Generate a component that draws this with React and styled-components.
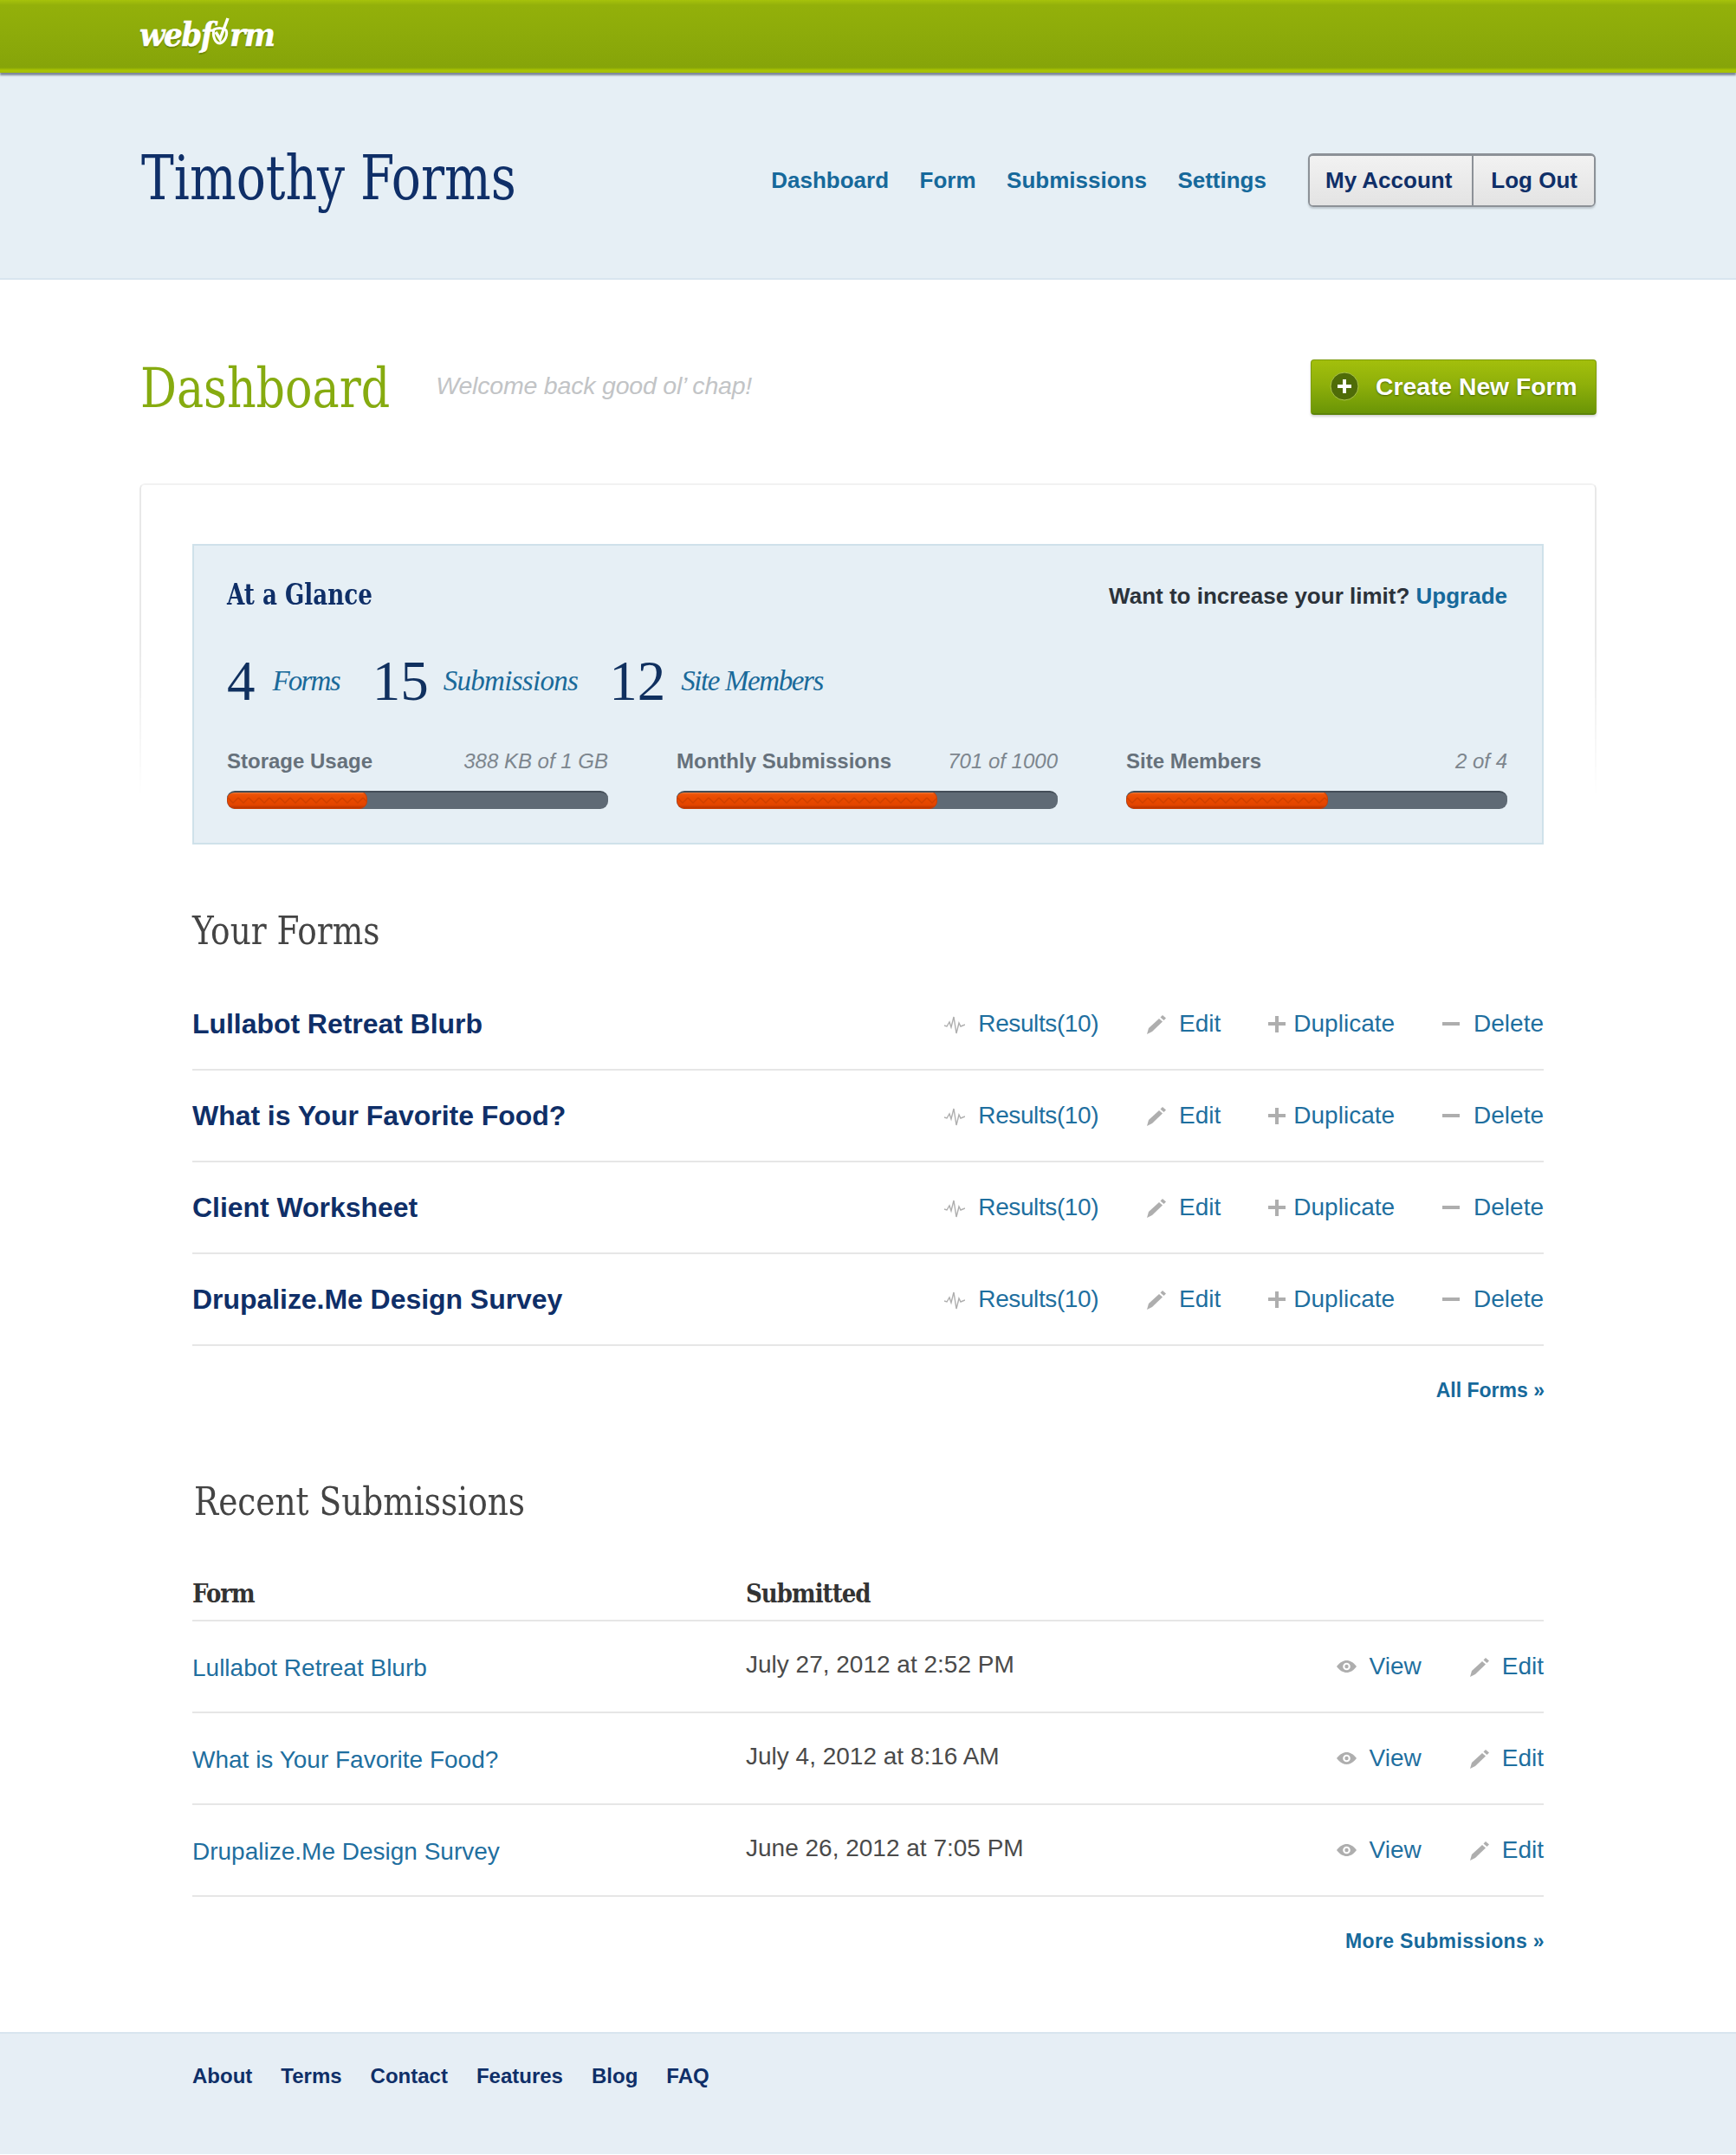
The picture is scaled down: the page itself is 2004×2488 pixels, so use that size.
import React from "react";
import styled, { createGlobalStyle } from "styled-components";

const Global = createGlobalStyle`
  html, body { margin: 0; padding: 0; background: #fff; }
  body { font-family: "Liberation Sans", Arial, sans-serif; color: #333; }
  a { text-decoration: none; color: inherit; }
  * { box-sizing: border-box; }
`;

const slab = `"DejaVu Serif Condensed", "DejaVu Serif", serif`;
const roman = `"Liberation Serif", serif`;

const TopBar = styled.div`
  height: 84px; padding: 20px 0 0 161px; display: flex; align-items: flex-start;
  background: linear-gradient(#a6c20b 0, #93b00a 6px, #8dab0a 40px, #86a409 78px, #aac402 81px, #a5bf02 84px);
  box-shadow: 0 3px 2px rgba(70, 80, 100, .65);
  position: relative;
`;
const Logo = styled.a`
  display: flex; align-items: center; height: 38px;
  font: italic bold 38px ${slab}; color: #fff; letter-spacing: -1.4px;
  -webkit-text-stroke: .5px #fff;
  text-shadow: 0 2px 1px rgba(60, 80, 0, .4);
`;
const LogoCheck = styled.svg`width: 24px; height: 36px; margin: -4px -1px 0 -3px; flex: none;`;

const Masthead = styled.header`
  height: 239px; padding: 0 162px 0 163px; display: flex; align-items: center; justify-content: space-between;
  background: #e6eff5; border-bottom: 2px solid #d8e5ef;
`;
const SiteName = styled.h1`
  margin: 6px 0 0; font: 400 71px/80px ${slab}; color: #0f2f68;
  transform: scaleX(.887); transform-origin: left center;
`;
const MastRight = styled.div`display: flex; align-items: center; margin-top: 10px;`;
const Nav = styled.nav`display: flex; gap: 35.5px; margin-right: 48px;`;
const NavLink = styled.a`font: bold 26px/32px "Liberation Sans", sans-serif; color: #16699b;`;
const AccountGroup = styled.div`
  display: flex; height: 62px; border: 2px solid #8c9197; border-top-width: 3px; border-radius: 6px; overflow: hidden;
  box-shadow: 0 2px 2px rgba(80, 90, 100, .25);
`;
const AccountLink = styled.a`
  display: flex; align-items: center; padding: 0 ${p => p.$right}px 0 ${p => p.$left}px;
  background: linear-gradient(#f2f2f2, #e3e3e3);
  font: bold 26px "Liberation Sans", sans-serif; color: #0f2f68;
  & + & { border-left: 2px solid #8c9197; }
`;

const Main = styled.main`padding: 0 161px 90px;`;
const TitleRow = styled.div`
  height: 235px; display: flex; align-items: center; padding: 12px 0 0 1px;
`;
const PageTitle = styled.h2`
  margin: 2px 24px 0 0; font: 400 64px/70px ${slab}; color: #86ab10;
  transform: scaleX(.908); transform-origin: left center;
`;
const Welcome = styled.p`margin: -2px 0 0; font: italic 28.5px "Liberation Sans", sans-serif; color: #c2c4c6; letter-spacing: -.2px;`;
const CreateButton = styled.a`
  margin-left: auto; width: 330px; height: 64px; display: flex; align-items: center; gap: 19px; padding-left: 21px;
  border-radius: 4px; background: linear-gradient(#a3bf0c, #8fb00a 45%, #6a9506);
  border: 1px solid #7d9b0c; border-bottom: 2px solid #5d840a;
  box-shadow: 0 2px 3px rgba(0, 0, 0, .18);
  font: bold 28.3px "Liberation Sans", sans-serif; color: #fff; text-shadow: 0 1px 2px rgba(40, 60, 0, .6);
`;
const PlusDisc = styled.svg`width: 34px; height: 34px; flex: none;`;

const Card = styled.section`
  position: relative; padding: 70px 61px 0;
  &::before {
    content: ""; position: absolute; top: 0; left: 0; right: 0; height: 360px;
    border: 2px solid #e8e8e8; border-top-color: #f2f2f2; border-bottom: none; border-radius: 6px 6px 0 0;
    -webkit-mask-image: linear-gradient(#000 50%, transparent);
    mask-image: linear-gradient(#000 50%, transparent);
  }
`;
const Glance = styled.div`
  position: relative; height: 347px; padding: 39px 39px 0 38px; background: #e6eff5; border: 2px solid #cfe1ea;
`;
const GlanceTop = styled.div`display: flex; justify-content: space-between; align-items: center; height: 36px;`;
const GlanceTitle = styled.h3`
  margin: -2px 0 0; font: bold 34px ${slab}; color: #0f2f68;
  transform: scaleX(.855); transform-origin: left center;
`;
const Limit = styled.p`margin: 3px 1px 0 0; font: bold 26px "Liberation Sans", sans-serif; color: #2b323a;`;
const LimitLink = styled.a`color: #16699b;`;
const Stats = styled.div`display: flex; align-items: center; height: 72px; margin-top: 45px;`;
const StatNum = styled.span`font: 400 65px/72px ${roman}; color: #10305f; margin-right: ${p => p.$gap}px;`;
const StatLabel = styled.a`
  font: italic 33px/72px ${roman}; color: #1a6a9a; margin-right: ${p => p.$gap}px; letter-spacing: ${p => p.$track}px;
`;
const Meters = styled.div`display: grid; grid-template-columns: repeat(3, 440px); column-gap: 79px; margin-top: 41px;`;
const Meter = styled.div``;
const MeterHead = styled.div`display: flex; justify-content: space-between; height: 32px; align-items: center;`;
const MeterName = styled.span`font: bold 24px "Liberation Sans", sans-serif; color: #66717b;`;
const MeterValue = styled.span`font: italic 24px "Liberation Sans", sans-serif; color: #7d868e;`;
const Track = styled.div`
  height: 21px; margin-top: 18px; border-radius: 9px; background: #5f6a75; border-top: 2px solid #434d57; overflow: hidden;
`;
const Fill = styled.div`
  height: 21px; margin-top: -2px; border-radius: 9px; overflow: hidden;
  background: linear-gradient(#f58a4a, #ec5208 16%, #e94a00 40%, #e34500 80%, #b83400);
  border: 1px solid #c93f05;
`;
const Zigzag = styled.svg`display: block; width: 100%; height: 100%;`;

const SectionTitle = styled.h3`
  margin: 0 0 0 ${p => p.$left || 0}px; padding: ${p => p.$top}px 0 ${p => p.$bottom}px;
  font: 400 45px/52px ${slab}; color: #444;
  transform: scaleX(.925); transform-origin: left center;
`;
const FormRow = styled.div`
  height: 106px; border-bottom: 2px solid #e6e6e6; display: flex; align-items: center; justify-content: space-between;
`;
const FormName = styled.a`font: bold 32px "Liberation Sans", sans-serif; color: #0f2f68; letter-spacing: -.05px;`;
const Actions = styled.div`display: flex; gap: 55px;`;
const Action = styled.a`
  display: flex; align-items: center; font: 28px/36px "Liberation Sans", sans-serif; color: #1f6f9f;
  letter-spacing: ${p => p.$tight ? "-.4px" : "0"};
`;
const ActionIcon = styled.svg`
  width: ${p => p.$w}px; height: 28px; margin-right: ${p => p.$gap}px; flex: none; color: #aeaeae;
`;
const MoreLink = styled.a`
  display: block; text-align: right; padding-top: 36px; margin-right: -1px;
  font: bold 23px/30px "Liberation Sans", sans-serif; color: #16699b;
  letter-spacing: ${p => p.$wide ? ".35px" : "0"};
`;
const TableHead = styled.div`
  display: grid; grid-template-columns: 639px 1fr; height: 112px; padding-bottom: 14px; align-items: end;
  border-bottom: 2px solid #e6e6e6;
`;
const HeadCell = styled.span`font: bold 29px/32px ${slab}; color: #333; letter-spacing: -1px;`;
const SubRow = styled.div`
  display: grid; grid-template-columns: 639px 1fr auto; height: 106px; align-items: center; border-bottom: 2px solid #e6e6e6;
`;
const SubName = styled.a`font: 28px "Liberation Sans", sans-serif; color: #1f6f9f; margin-top: 3px;`;
const SubDate = styled.span`font: 28px "Liberation Sans", sans-serif; color: #4a4a4a; margin-top: -4px;`;

const Footer = styled.footer`
  height: 141px; padding: 33px 0 0 222px; display: flex; gap: 33px; align-items: flex-start;
  background: #e6eef5; border-top: 2px solid #d8e5ef;
`;
const FooterLink = styled.a`font: bold 24px/32px "Liberation Sans", sans-serif; color: #0f2f68;`;

const Pulse = () => (
  <ActionIcon $w={24} $gap={15} viewBox="0 0 24 28" fill="none" stroke="currentColor" strokeWidth="1.4">
    <path d="M0 16l3 1 3-5 2 6 3-12 3 19 3-12 2 4 5-2" />
  </ActionIcon>
);
const Pencil = () => (
  <ActionIcon $w={25} $gap={13} viewBox="0 0 25 28" fill="currentColor">
    <path d="M1 26l2-7L15 8l4 3.500L7 23z" />
    <path d="M16.500 6.500l2.500-2.500 4 3.500-2.500 2.500z" />
  </ActionIcon>
);
const Plus = () => (
  <ActionIcon $w={20} $gap={9} viewBox="0 0 20 28" fill="currentColor">
    <path d="M8 5h4v7h8v4h-8v8H8v-8H0v-4h8z" />
  </ActionIcon>
);
const Minus = () => (
  <ActionIcon $w={20} $gap={16} viewBox="0 0 20 28" fill="currentColor">
    <rect y="12" width="20" height="4" />
  </ActionIcon>
);
const Eye = () => (
  <ActionIcon $w={23} $gap={15} viewBox="0 0 23 28" fill="none">
    <path d="M0 14c4-5 7.500-7 11.500-7S19 9 23 14c-4 5-7.500 7-11.500 7S4 19 0 14z" fill="currentColor" />
    <circle cx="11.500" cy="14" r="4.300" fill="#fff" />
    <circle cx="11.500" cy="14" r="2.200" fill="currentColor" />
  </ActionIcon>
);

const meters = [
  { name: "Storage Usage", value: "388 KB of 1 GB", pct: 36.8, id: "z1" },
  { name: "Monthly Submissions", value: "701 of 1000", pct: 68.5, id: "z2" },
  { name: "Site Members", value: "2 of 4", pct: 53, id: "z3" },
];
const forms = ["Lullabot Retreat Blurb", "What is Your Favorite Food?", "Client Worksheet", "Drupalize.Me Design Survey"];
const subs = [
  ["Lullabot Retreat Blurb", "July 27, 2012 at 2:52 PM"],
  ["What is Your Favorite Food?", "July 4, 2012 at 8:16 AM"],
  ["Drupalize.Me Design Survey", "June 26, 2012 at 7:05 PM"],
];
const footerLinks = ["About", "Terms", "Contact", "Features", "Blog", "FAQ"];

export default function App() {
  return (
    <>
      <Global />
      <TopBar>
        <Logo>
          webf
          <LogoCheck viewBox="0 0 24 36" fill="none">
            <path d="M5 15c4-2 11-2 14 1 2 5-1 13-7 15-6 0-9-9-7-16z" stroke="#fff" strokeWidth="3" />
            <path d="M7 18l5 8L21 2" stroke="#fff" strokeWidth="3.500" />
          </LogoCheck>
          rm
        </Logo>
      </TopBar>
      <Masthead>
        <SiteName>Timothy Forms</SiteName>
        <MastRight>
          <Nav>
            <NavLink href="#">Dashboard</NavLink>
            <NavLink href="#">Form</NavLink>
            <NavLink href="#">Submissions</NavLink>
            <NavLink href="#">Settings</NavLink>
          </Nav>
          <AccountGroup>
            <AccountLink href="#" $left={18} $right={23}>My Account</AccountLink>
            <AccountLink href="#" $left={20} $right={19}>Log Out</AccountLink>
          </AccountGroup>
        </MastRight>
      </Masthead>
      <Main>
        <TitleRow>
          <PageTitle>Dashboard</PageTitle>
          <Welcome>Welcome back good ol’ chap!</Welcome>
          <CreateButton href="#">
            <PlusDisc viewBox="0 0 34 34">
              <circle cx="17" cy="17" r="16" fill="#4f6c08" stroke="#a9c24a" strokeWidth="1" />
              <path d="M15 9h4v6h6v4h-6v6h-4v-6H9v-4h6z" fill="#fff" />
            </PlusDisc>
            Create New Form
          </CreateButton>
        </TitleRow>
        <Card>
          <Glance>
            <GlanceTop>
              <GlanceTitle>At a Glance</GlanceTitle>
              <Limit>Want to increase your limit? <LimitLink href="#">Upgrade</LimitLink></Limit>
            </GlanceTop>
            <Stats>
              <StatNum $gap={20}>4</StatNum><StatLabel href="#" $gap={38} $track={-1.8}>Forms</StatLabel>
              <StatNum $gap={17}>15</StatNum><StatLabel href="#" $gap={36} $track={-.7}>Submissions</StatLabel>
              <StatNum $gap={18}>12</StatNum><StatLabel href="#" $gap={0} $track={-1.4}>Site Members</StatLabel>
            </Stats>
            <Meters>
              {meters.map(m => (
                <Meter key={m.id}>
                  <MeterHead>
                    <MeterName>{m.name}</MeterName>
                    <MeterValue>{m.value}</MeterValue>
                  </MeterHead>
                  <Track>
                    <Fill style={{ width: `${m.pct}%` }}>
                      <Zigzag>
                        <defs>
                          <pattern id={m.id} width="12" height="19" patternUnits="userSpaceOnUse">
                            <path d="M0 7l6 6 6-6" fill="none" stroke="#cf4000" strokeWidth="1.500" />
                          </pattern>
                        </defs>
                        <rect width="100%" height="100%" fill={`url(#${m.id})`} />
                      </Zigzag>
                    </Fill>
                  </Track>
                </Meter>
              ))}
            </Meters>
          </Glance>

          <SectionTitle $top={74} $bottom={29}>Your Forms</SectionTitle>
          {forms.map(f => (
            <FormRow key={f}>
              <FormName href="#">{f}</FormName>
              <Actions>
                <Action href="#" $tight><Pulse />Results(10)</Action>
                <Action href="#"><Pencil />Edit</Action>
                <Action href="#"><Plus />Duplicate</Action>
                <Action href="#"><Minus />Delete</Action>
              </Actions>
            </FormRow>
          ))}
          <MoreLink href="#">All Forms »</MoreLink>

          <SectionTitle $top={88} $bottom={0} $left={2}>Recent Submissions</SectionTitle>
          <TableHead>
            <HeadCell>Form</HeadCell>
            <HeadCell>Submitted</HeadCell>
          </TableHead>
          {subs.map(([n, d]) => (
            <SubRow key={n}>
              <SubName href="#">{n}</SubName>
              <SubDate>{d}</SubDate>
              <Actions>
                <Action href="#"><Eye />View</Action>
                <Action href="#"><Pencil />Edit</Action>
              </Actions>
            </SubRow>
          ))}
          <MoreLink href="#" $wide>More Submissions »</MoreLink>
        </Card>
      </Main>
      <Footer>
        {footerLinks.map(l => <FooterLink key={l} href="#">{l}</FooterLink>)}
      </Footer>
    </>
  );
}
